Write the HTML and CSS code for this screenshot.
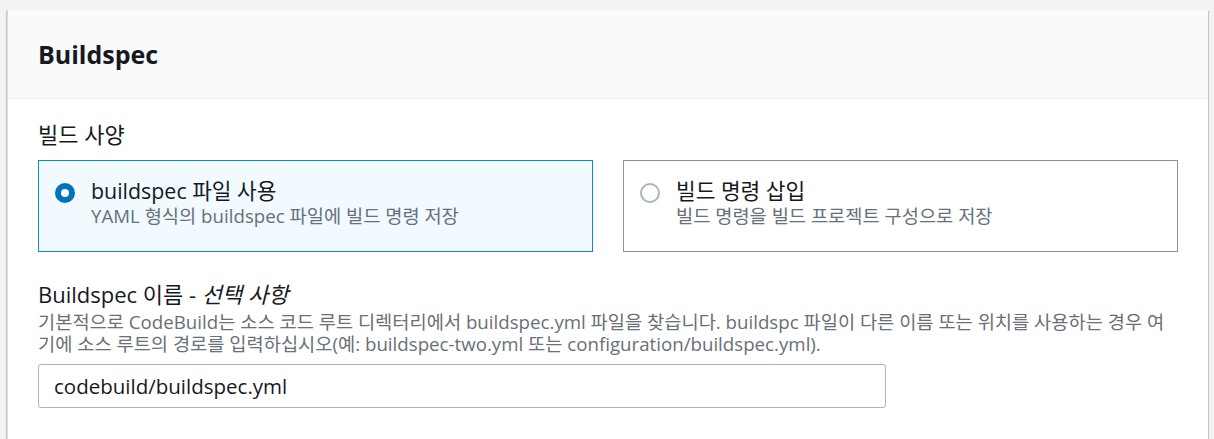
FILE: index.html
```html
<!DOCTYPE html>
<html lang="ko">
<head>
<meta charset="utf-8">
<link rel="stylesheet" href="styles.css">
</head>
<body>
<div class="card">
  <div class="card-header"><h2 class="title">Buildspec</h2></div>
  <div class="card-body">
    <div class="field-label">빌드 사양</div>
    <div class="tiles">
      <div class="tile tile-selected">
        <span class="radio radio-on"></span>
        <div class="tile-text">
          <div class="tile-title">buildspec 파일 사용</div>
          <div class="tile-desc">YAML 형식의 buildspec 파일에 빌드 명령 저장</div>
        </div>
      </div>
      <div class="tile">
        <span class="radio"></span>
        <div class="tile-text">
          <div class="tile-title">빌드 명령 삽입</div>
          <div class="tile-desc">빌드 명령을 빌드 프로젝트 구성으로 저장</div>
        </div>
      </div>
    </div>
    <div class="field">
      <div class="field-label">Buildspec 이름 - <i class="opt">선택 사항</i></div>
      <div class="field-desc">기본적으로 CodeBuild는 소스 코드 루트 디렉터리에서 buildspec.yml 파일을 찾습니다. buildspc 파일이 다른 이름 또는 위치를 사용하는 경우 여기에 소스 루트의 경로를 입력하십시오(예: buildspec-two.yml 또는 configuration/buildspec.yml).</div>
      <div class="input">codebuild/buildspec.yml</div>
    </div>
  </div>
</div>
</body>
</html>
```
FILE: styles.css
```css
html, body {
  margin: 0;
  padding: 0;
  background: #f2f3f3;
  font-family: "Open Sans", "Noto Sans CJK KR", sans-serif;
  color: #16191f;
}
.card {
  margin: 10px 0 0 7px;
  width: 1201px;
  height: 440px;
  background: #ffffff;
  box-shadow: 0 1px 1px 0 rgba(0, 28, 36, 0.3), 1px 1px 1px 0 rgba(0, 28, 36, 0.15), -1px 1px 1px 0 rgba(0, 28, 36, 0.15);
  border-left: 1px solid #d5dbdb;
  box-sizing: border-box;
}
.card-header {
  height: 89px;
  box-sizing: border-box;
  background: #fafafa;
  border-bottom: 1px solid #eaeded;
  display: flex;
  align-items: center;
  padding: 0 30px;
}
.title {
  margin: 0;
  font-size: 25px;
  font-weight: 700;
  line-height: 32px;
  color: #16191f;
}
.card-body {
  padding: 21px 30px 0 30px;
}
.field-label {
  font-size: 22px;
  line-height: 28px;
}
.opt {
  font-style: italic;
}
.tiles {
  display: grid;
  grid-template-columns: 555px 555px;
  column-gap: 30px;
  margin-top: 12px;
}
.tile {
  display: flex;
  align-items: flex-start;
  height: 92px;
  box-sizing: border-box;
  border: 1px solid #879596;
  padding: 16px 16px 0 16px;
  background: #ffffff;
}
.tile-selected {
  border-color: #0a8fc4;
  background: #f1faff;
}
.radio {
  width: 20px;
  height: 20px;
  box-sizing: border-box;
  border-radius: 50%;
  border: 2px solid #aab7b8;
  background: #fff;
  margin-top: 6px;
  flex: none;
}
.radio-on {
  border: 6px solid #0073bb;
}
.tile-text {
  margin-left: 16px;
}
.tile-title {
  font-size: 21.4px;
  line-height: 27px;
}
.tile-desc {
  font-size: 18.7px;
  line-height: 24px;
  color: #687078;
}
.field {
  margin-top: 28px;
}
.field-desc {
  margin-top: 3px;
  font-size: 18.7px;
  line-height: 22px;
  color: #687078;
}
.input {
  margin-top: 9px;
  width: 848px;
  height: 44px;
  box-sizing: border-box;
  border: 1px solid #aab7b8;
  border-radius: 3px;
  padding: 0 15px;
  display: flex;
  align-items: center;
  font-size: 20.5px;
  color: #16191f;
}
```
